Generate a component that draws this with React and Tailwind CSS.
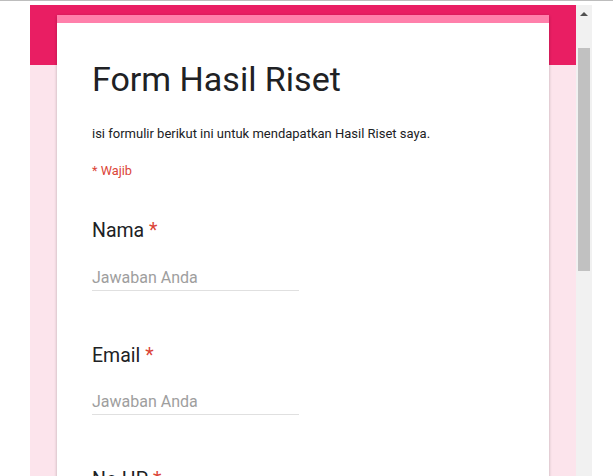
import React from 'react';

const questions = ['Nama', 'Email', 'No HP'];

const Question = ({ label }) => (
    <div className="mt-[39px] first:mt-[39px]">
        <div className="text-[19.5px] leading-[24px] text-[#202124]">
            {label} <span className="text-[#db4437]">*</span>
        </div>
        <div className="mt-[22.5px] w-[207px] border-b border-[#e0e0e0] text-[16px] leading-[24px] text-[#9e9e9e]">
            Jawaban Anda
        </div>
        <div className="h-[14px]" />
    </div>
);

const Scrollbar = () => (
    <div className="relative w-[16px] shrink-0 bg-[#f1f1f1]">
        {/* up arrow */}
        <div className="absolute left-[4px] top-[7px] w-0 h-0 border-l-[4px] border-r-[4px] border-b-[4px] border-l-transparent border-r-transparent border-b-[#505050]" />
        <div className="absolute left-[2px] top-[43px] w-[12px] h-[223px] bg-[#c1c1c1]" />
    </div>
);

export default function App() {
    return (
        <div className="w-[613px] h-[476px] overflow-hidden bg-white border-t border-[#bdbdbd]" style={{ fontFamily: 'Roboto, "Noto Sans", sans-serif' }}>
            <div className="flex h-[475px] pt-[4px] pl-[30px] pr-[21px]">
                <div className="relative flex-1 overflow-hidden bg-[#fce4ec]">
                    <div className="absolute inset-x-0 top-0 h-[60px] bg-[#e91e63]" />

                    {/* Card */}
                    <div className="relative mx-[27px] mt-[10px] bg-white shadow-[0_1px_3px_rgba(0,0,0,0.25)]">
                        <div className="h-[8px] bg-[#ff80ab]" />
                        <div className="pl-[35px] pr-[24px] pt-[36px] pb-[40px]">
                            <h1 className="text-[34px] leading-[40px] text-[#202124]">Form Hasil Riset</h1>
                            <p className="mt-[25px] text-[13px] leading-[20px] text-[#202124]">
                                isi formulir berikut ini untuk mendapatkan Hasil Riset saya.
                            </p>
                            <p className="mt-[18px] text-[12.75px] leading-[18px] text-[#db4437]">* Wajib</p>

                            <div>
                                {questions.map((q) => (
                                    <Question key={q} label={q} />
                                ))}
                            </div>
                        </div>
                    </div>
                </div>
                <Scrollbar />
            </div>
        </div>
    );
}
